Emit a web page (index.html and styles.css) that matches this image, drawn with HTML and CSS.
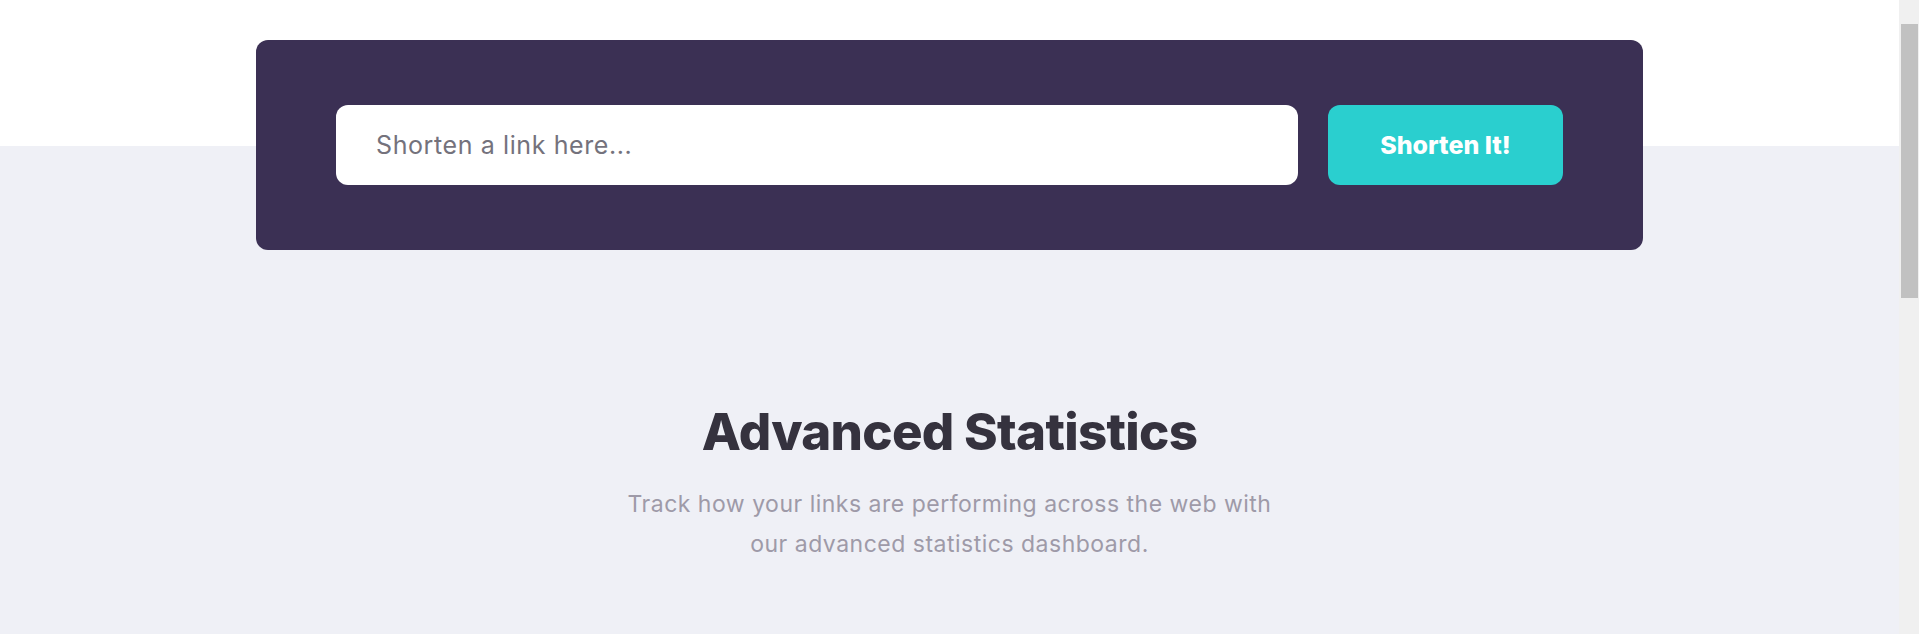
FILE: index.html
```html
<!DOCTYPE html>
<html lang="en">
<head>
<meta charset="utf-8">
<title>Shortly</title>
<link rel="stylesheet" href="styles.css">
</head>
<body>
  <main class="page">
    <section class="shorten">
      <form class="shorten-card">
        <input class="shorten-input" type="text" placeholder="Shorten a link here...">
        <button class="shorten-button" type="button">Shorten It!</button>
      </form>
    </section>
    <section class="stats">
      <h2 class="stats-title">Advanced Statistics</h2>
      <p class="stats-text">Track how your links are performing across the web with our advanced statistics dashboard.</p>
    </section>
  </main>
  <div class="scrollbar" aria-hidden="true">
    <div class="scrollbar-thumb"></div>
  </div>
</body>
</html>
```
FILE: styles.css
```css
html, body {
  height: 100%;
}
body {
  margin: 0;
  display: flex;
  overflow: hidden;
  background: #eff0f6;
  font-family: "Inter", "Noto Sans", sans-serif;
}
.page {
  flex: 1;
  min-width: 0;
  overflow: hidden;
}
.scrollbar {
  width: 20px;
  flex-shrink: 0;
  background: #f0f0f0;
  padding: 24px 1px 0 2px;
  box-sizing: border-box;
}
.scrollbar-thumb {
  height: 274px;
  background: #c1c1c1;
}
.shorten {
  padding-top: 40px;
  background: linear-gradient(to bottom, #ffffff 146px, #eff0f6 146px);
}
.shorten-card {
  box-sizing: border-box;
  width: 1387px;
  margin: 0 auto;
  padding: 65px 80px;
  background: #3b3054;
  border-radius: 12px;
  display: flex;
  gap: 30px;
}
.shorten-input {
  flex: 1;
  height: 80px;
  box-sizing: border-box;
  border: none;
  border-radius: 12px;
  padding: 0 40px;
  font-family: inherit;
  font-size: 25px;
  letter-spacing: 0.6px;
  color: #35323e;
  background: #fff;
  outline: none;
}
.shorten-input::placeholder {
  color: #74727c;
}
.shorten-button {
  width: 235px;
  height: 80px;
  border: none;
  border-radius: 12px;
  background: #2acfcf;
  color: #fff;
  font-family: inherit;
  font-size: 25px;
  font-weight: 800;
}
.stats {
  padding: 152px 0 40px;
  text-align: center;
}
.stats-title {
  margin: 0;
  font-size: 51px;
  line-height: 60px;
  font-weight: 800;
  color: #35323e;
  letter-spacing: -0.7px;
}
.stats-text {
  max-width: 660px;
  margin: 22px auto 0;
  font-size: 23px;
  letter-spacing: 0.5px;
  line-height: 40px;
  color: #9e9aa8;
}
```
